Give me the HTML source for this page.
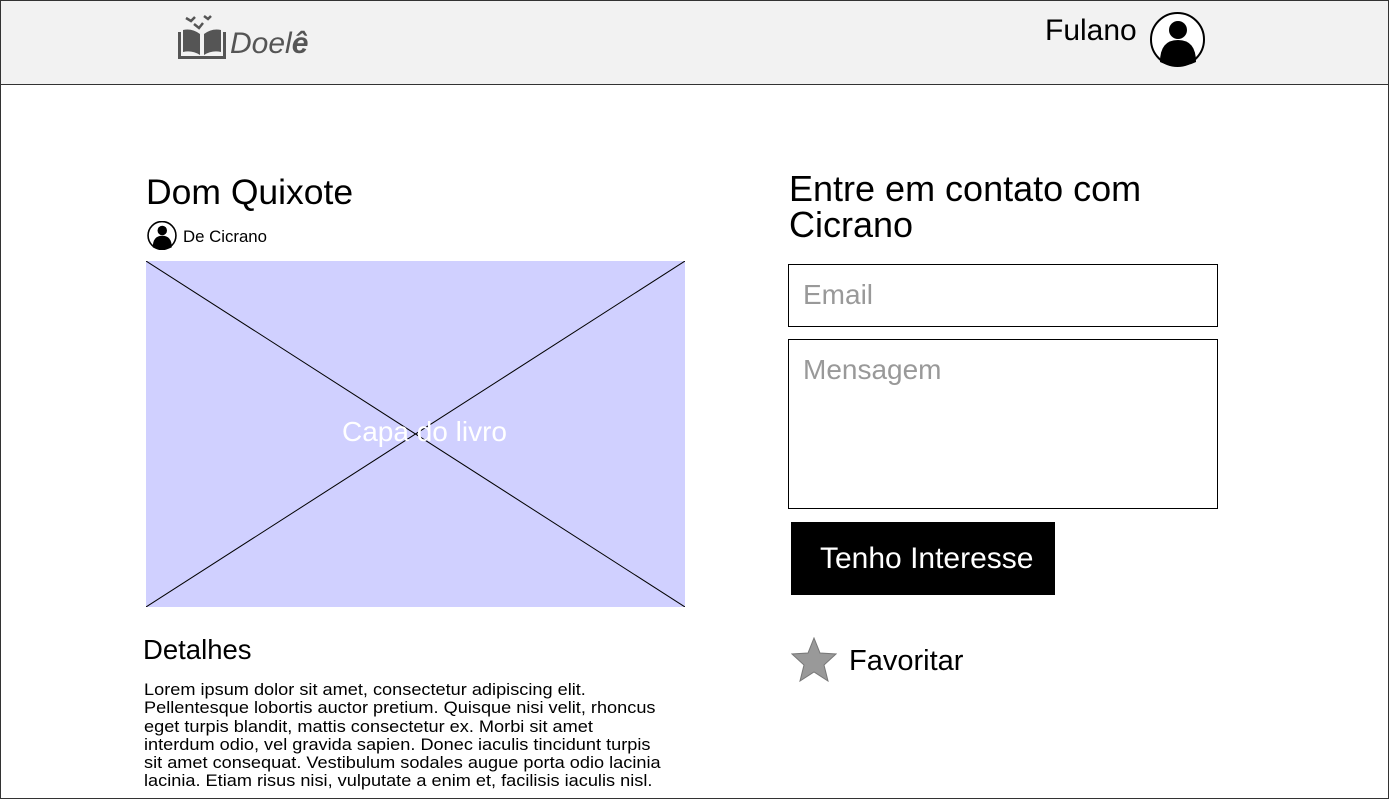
<!DOCTYPE html>
<html><head><style>
body{margin:0;width:1389px;height:799px;position:relative;overflow:hidden;background:#fff;font-family:"Liberation Sans",sans-serif;}
.a{position:absolute;}
</style></head><body>
<div class="a" style="left:0;top:0;width:1387px;height:83px;background:#f2f2f2;border:1px solid #333;"></div>
<div class="a" style="left:0;top:84px;width:1387px;height:714px;border:1px solid #333;border-top:none;"></div>
<svg class="a" style="left:176px;top:12px" width="52" height="50" viewBox="0 0 52 50">
<path d="M10 6 l5 3 l4 -4 M18 12 l5 4 l4 -5 M28 4 l4 3 l3 -3" stroke="#555" stroke-width="2.5" fill="none"/>
<path d="M2 20 v27 h48 v-27 h-3 v24 h-42 v-24z" fill="#555"/>
<path d="M7 18 q9 -2 17 4 v21 q-8 -5 -17 -3z M45 18 q-9 -2 -17 4 v21 q8 -5 17 -3z" fill="#555"/>
</svg>
<div class="a" style="left:230px;top:27px;font-size:30px;color:#555;font-style:italic;">Doel<b>ê</b></div>
<div class="a" style="left:1045px;top:14px;font-size:30px;">Fulano</div>
<svg class="a" style="left:1149px;top:12px" width="57" height="55" viewBox="0 0 57 55"><circle cx="28.5" cy="27.5" r="26.5" fill="#fff" stroke="#000" stroke-width="2"/><circle cx="29" cy="18" r="9" fill="#000"/><path d="M11 50 q0 -22 18 -22 q18 0 18 22 q-8 4 -18 4 q-10 0 -18 -4z" fill="#000"/></svg>
<div class="a" style="left:146px;top:172px;font-size:35.5px;">Dom Quixote</div>
<svg class="a" style="left:147px;top:221px" width="30" height="29" viewBox="0 0 57 55"><circle cx="28.5" cy="27.5" r="26.5" fill="#fff" stroke="#000" stroke-width="3"/><circle cx="29" cy="18" r="9" fill="#000"/><path d="M11 50 q0 -22 18 -22 q18 0 18 22 q-8 4 -18 4 q-10 0 -18 -4z" fill="#000"/></svg>
<div class="a" style="left:183px;top:227px;font-size:16.8px;">De Cicrano</div>
<svg class="a" style="left:146px;top:261px" width="539" height="346"><rect width="539" height="346" fill="#d0d0ff"/><line x1="0" y1="0" x2="539" y2="346" stroke="#000"/><line x1="539" y1="0" x2="0" y2="346" stroke="#000"/></svg>
<div class="a" style="left:342px;top:416px;color:#fff;font-size:28px;white-space:nowrap;">Capa do livro</div>
<div class="a" style="left:143px;top:634px;font-size:27.5px;">Detalhes</div>
<div class="a" style="left:144px;top:681px;font-size:16.5px;line-height:18.3px;white-space:nowrap;transform:scaleX(1.1);transform-origin:0 0;">Lorem ipsum dolor sit amet, consectetur adipiscing elit.<br>Pellentesque lobortis auctor pretium. Quisque nisi velit, rhoncus<br>eget turpis blandit, mattis consectetur ex. Morbi sit amet<br>interdum odio, vel gravida sapien. Donec iaculis tincidunt turpis<br>sit amet consequat. Vestibulum sodales augue porta odio lacinia<br>lacinia. Etiam risus nisi, vulputate a enim et, facilisis iaculis nisl.</div>
<div class="a" style="left:789px;top:171px;font-size:36px;line-height:36px;">Entre em contato com<br>Cicrano</div>
<div class="a" style="left:788px;top:264px;width:428px;height:61px;border:1px solid #000;"></div>
<div class="a" style="left:803px;top:279px;font-size:28px;color:#999;">Email</div>
<div class="a" style="left:788px;top:339px;width:428px;height:168px;border:1px solid #000;"></div>
<div class="a" style="left:803px;top:354px;font-size:28px;color:#999;">Mensagem</div>
<div class="a" style="left:791px;top:522px;width:264px;height:73px;background:#000;"></div>
<div class="a" style="left:820px;top:542px;font-size:30px;color:#fff;">Tenho Interesse</div>
<svg class="a" style="left:791px;top:637px" width="46" height="45" viewBox="0 0 46 45"><polygon points="23,1 29,16 45,17 33,28 37,44 23,35 9,44 13,28 1,17 17,16" fill="#999" stroke="#777"/></svg>
<div class="a" style="left:849px;top:645px;font-size:29px;">Favoritar</div>
</body></html>
